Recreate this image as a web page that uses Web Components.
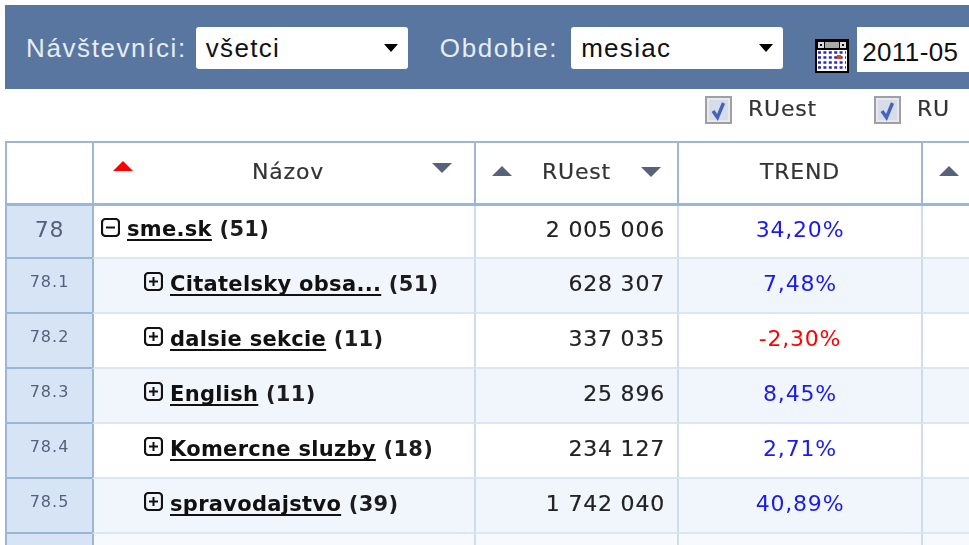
<!DOCTYPE html>
<html lang="sk">
<head>
<meta charset="utf-8">
<title>Návštevníci</title>
<style>
  html, body { margin: 0; height: 100%; overflow: hidden; background: #fff; }
  body { font-family: "DejaVu Sans", sans-serif; }
</style>
</head>
<body>
<stats-page></stats-page>

<script>
const COLS = '85px 382px 203px 244px 60px';

class FilterSelect extends HTMLElement {
  connectedCallback() {
    this.attachShadow({ mode: 'open' });
    this.shadowRoot.innerHTML = `
      <style>
        :host { display: flex; align-items: center; gap: var(--gap, 9px); color: #e6edf6; font: 26px "Liberation Sans", sans-serif; letter-spacing: 1.6px; }
        .box {
          box-sizing: border-box; width: 212px; height: 42px; padding: 0 10px;
          display: flex; align-items: center; justify-content: space-between;
          background: #fff; border-radius: 3px; color: #111; letter-spacing: 1.3px;
        }
        i { width: 0; height: 0; border: 7.5px solid transparent; border-top: 8px solid #000; border-bottom: 0; }
      </style>
      <span>${this.getAttribute('label')}</span>
      <div class="box"><span>${this.getAttribute('value')}</span><i></i></div>`;
  }
}

class TopBar extends HTMLElement {
  connectedCallback() {
    this.attachShadow({ mode: 'open' });
    this.shadowRoot.innerHTML = `
      <style>
        :host {
          display: flex; align-items: flex-start; height: 84px; margin-left: 5px; padding: 22px 0 0 21px;
          box-sizing: border-box; background: #58769f; white-space: nowrap;
        }
        .date { display: flex; align-items: flex-start; margin-left: 32px; }
        svg { display: block; margin-top: 12px; }
        .input {
          box-sizing: border-box; width: 130px; height: 45px; margin-left: 8px; padding: 11px 0 0 5px;
          background: #fff; color: #111; font: 26px/28px "Liberation Sans", sans-serif; letter-spacing: .4px;
        }
        filter-select + filter-select { margin-left: 32px; --gap: 13px; }
      </style>
      <filter-select label="Návštevníci:" value="všetci"></filter-select>
      <filter-select label="Obdobie:" value="mesiac"></filter-select>
      <div class="date">
        <svg width="34" height="34" viewBox="0 0 34 34">
          <rect width="34" height="34" fill="#000"/>
          <rect x="2" y="11" width="30" height="21" fill="#fff"/>
          <rect x="10" y="3" width="14" height="6" fill="#aaa"/>
          <rect x="3" y="3" width="6" height="6" fill="#ddd"/><rect x="5" y="5" width="2" height="2" fill="#111"/>
          <rect x="25" y="3" width="6" height="6" fill="#ddd"/><rect x="27" y="5" width="2" height="2" fill="#111"/>
          <path d="M3 13.5h28M3 18.5h28M3 23.5h28M3 28.5h28" stroke="#2b2bb8" stroke-width="2.6" stroke-dasharray="3 2.4"/>
          <rect x="22" y="16" width="4" height="4" fill="#e2461c"/>
        </svg>
        <div class="input">2011-05</div>
      </div>`;
  }
}

class ColumnToggle extends HTMLElement {
  connectedCallback() {
    this.attachShadow({ mode: 'open' });
    this.shadowRoot.innerHTML = `
      <style>
        :host { display: flex; align-items: flex-start; gap: 16px; font: 22px "DejaVu Sans", sans-serif; color: #333; letter-spacing: .8px; -webkit-text-stroke: .2px #333; }
        svg { display: block; }
      </style>
      <svg width="27" height="28" viewBox="0 0 27 28">
        <rect x="1" y="1" width="25" height="26" fill="#e6e8ee" stroke="#a0a0a0" stroke-width="2"/>
        <rect x="4" y="4" width="19" height="20" fill="#d6dcea"/>
        <path d="M8 15 L12.5 21.5 L18.5 7" fill="none" stroke="#4563b8" stroke-width="3.4"/>
      </svg>
      <span><slot></slot></span>`;
  }
}

class SortHead extends HTMLElement {
  connectedCallback() {
    const up = this.getAttribute('up');
    const down = this.getAttribute('down');
    this.attachShadow({ mode: 'open' });
    this.shadowRoot.innerHTML = `
      <style>
        :host {
          display: flex; align-items: center; justify-content: center; position: relative;
          box-sizing: border-box; height: 100%; border-left: 2px solid #9cb6d6;
          font: 22px "DejaVu Sans", sans-serif; color: #333; letter-spacing: .8px; padding-bottom: 4px; -webkit-text-stroke: .2px #333;
        }
        i { position: absolute; width: 0; height: 0; border: 10px solid transparent; }
        .up { left: var(--up-x, 16px); top: var(--up-y, 23px); border-top: 0; border-bottom: 10px solid #58627a; }
        .up.red { border-bottom-color: #f00; }
        .down { right: var(--down-x, 16px); top: var(--down-y, 24px); border-bottom: 0; border-top: 10px solid #58627a; }
      </style>
      ${up ? `<i class="up ${up === 'red' ? 'red' : ''}"></i>` : ''}
      <slot></slot>
      ${down ? `<i class="down"></i>` : ''}`;
  }
}

class TreeRow extends HTMLElement {
  connectedCallback() {
    const sub = this.hasAttribute('sub');
    const open = this.hasAttribute('open');
    const neg = this.getAttribute('trend').startsWith('-');
    this.attachShadow({ mode: 'open' });
    this.shadowRoot.innerHTML = `
      <style>
        :host {
          display: grid; grid-template-columns: ${COLS}; height: ${sub ? 55 : 53}px; box-sizing: border-box;
          font: 22px "DejaVu Sans", sans-serif; color: #222;
          background: ${this.hasAttribute('tint') ? '#f1f6fd' : '#fff'};
        }
        div { display: flex; align-items: center; box-sizing: border-box; border-bottom: 2px solid #dce6f4; padding-bottom: ${sub ? 4 : 5}px; white-space: nowrap; }
        .num {
          justify-content: center; background: #d6e4f6; color: #56607c; border-bottom-color: #9cb6d6;
          font-size: ${sub ? 16 : 22}px; padding-bottom: ${sub ? 8 : 5}px; letter-spacing: ${sub ? 1 : .8}px;
        }
        .name { border-left: 2px solid #9cb6d6; padding-left: ${sub ? 50 : 7}px; font-size: 21px; font-weight: bold; gap: 7px; color: #1c1c1c; letter-spacing: .3px; }
        .name a { color: #111; text-decoration: underline; text-decoration-thickness: 2px; text-underline-offset: 3px; text-decoration-skip-ink: none; }
        .name svg { display: block; margin-top: -4px; flex: none; }
        .val { justify-content: flex-end; padding-right: 12px; border-left: 2px solid #cfdcee; letter-spacing: .8px; -webkit-text-stroke: .2px #222; }
        .trend { justify-content: center; border-left: 2px solid #cfdcee; color: ${neg ? '#f00' : '#1a1aee'}; letter-spacing: .8px; }
        .rest { border-left: 2px solid #cfdcee; }
      </style>
      <div class="num">${this.getAttribute('num')}</div>
      <div class="name">
        <svg width="19" height="19" viewBox="0 0 19 19">
          <rect x="1" y="1" width="17" height="17" rx="3.5" fill="none" stroke="#111" stroke-width="2.2"/>
          <path d="M5 9.5h9${open ? '' : 'M9.5 5v9'}" stroke="#111" stroke-width="2"/>
        </svg>
        <span><a>${this.getAttribute('name')}</a> <span>(${this.getAttribute('count')})</span></span>
      </div>
      <div class="val">${this.getAttribute('value')}</div>
      <div class="trend">${this.getAttribute('trend')}</div>
      <div class="rest"></div>`;
  }
}

class BlankRow extends HTMLElement {
  connectedCallback() {
    this.attachShadow({ mode: 'open' });
    this.shadowRoot.innerHTML = `
      <style>
        :host { display: grid; grid-template-columns: ${COLS}; height: 12px; background: #f6f9fe; }
        div { border-left: 2px solid #cfdcee; }
        .num { background: #d6e4f6; border-left: 0; }
        .name { border-left-color: #9cb6d6; }
      </style>
      <div class="num"></div><div class="name"></div><div></div><div></div><div></div>`;
  }
}

class StatsTable extends HTMLElement {
  connectedCallback() {
    this.attachShadow({ mode: 'open' });
    this.shadowRoot.innerHTML = `
      <style>
        :host { display: block; width: 962px; margin-left: 5px; border-left: 2px solid #9cb6d6; border-top: 2px solid #9cb6d6; }
        .head { display: grid; grid-template-columns: ${COLS}; height: 60px; border-bottom: 3px solid #9cb6d6; }
      </style>
      <div class="head">
        <div></div>
        <sort-head up="red" down="1" style="--up-x:19px;--up-y:18px;--down-x:22px;--down-y:20px;padding-left:8px">Názov</sort-head>
        <sort-head up="1" down="1">RUest</sort-head>
        <sort-head>TREND</sort-head>
        <sort-head up="1"></sort-head>
      </div>
      <slot></slot>`;
  }
}

class StatsPage extends HTMLElement {
  connectedCallback() {
    this.attachShadow({ mode: 'open' });
    this.shadowRoot.innerHTML = `
      <style>
        :host { display: block; padding-top: 5px; height: 540px; overflow: hidden; filter: blur(.35px); }
        .toggles { display: flex; height: 52px; box-sizing: border-box; padding: 7px 0 0 705px; gap: 57px; }
      </style>
      <top-bar></top-bar>
      <div class="toggles">
        <column-toggle>RUest</column-toggle>
        <column-toggle>RU</column-toggle>
      </div>
      <stats-table>
        <tree-row open num="78" name="sme.sk" count="51" value="2 005 006" trend="34,20%"></tree-row>
        <tree-row sub tint num="78.1" name="Citatelsky obsa..." count="51" value="628 307" trend="7,48%"></tree-row>
        <tree-row sub num="78.2" name="dalsie sekcie" count="11" value="337 035" trend="-2,30%"></tree-row>
        <tree-row sub tint num="78.3" name="English" count="11" value="25 896" trend="8,45%"></tree-row>
        <tree-row sub num="78.4" name="Komercne sluzby" count="18" value="234 127" trend="2,71%"></tree-row>
        <tree-row sub tint num="78.5" name="spravodajstvo" count="39" value="1 742 040" trend="40,89%"></tree-row>
        <blank-row></blank-row>
      </stats-table>`;
  }
}

customElements.define('filter-select', FilterSelect);
customElements.define('top-bar', TopBar);
customElements.define('column-toggle', ColumnToggle);
customElements.define('sort-head', SortHead);
customElements.define('tree-row', TreeRow);
customElements.define('blank-row', BlankRow);
customElements.define('stats-table', StatsTable);
customElements.define('stats-page', StatsPage);
</script>
</body>
</html>
